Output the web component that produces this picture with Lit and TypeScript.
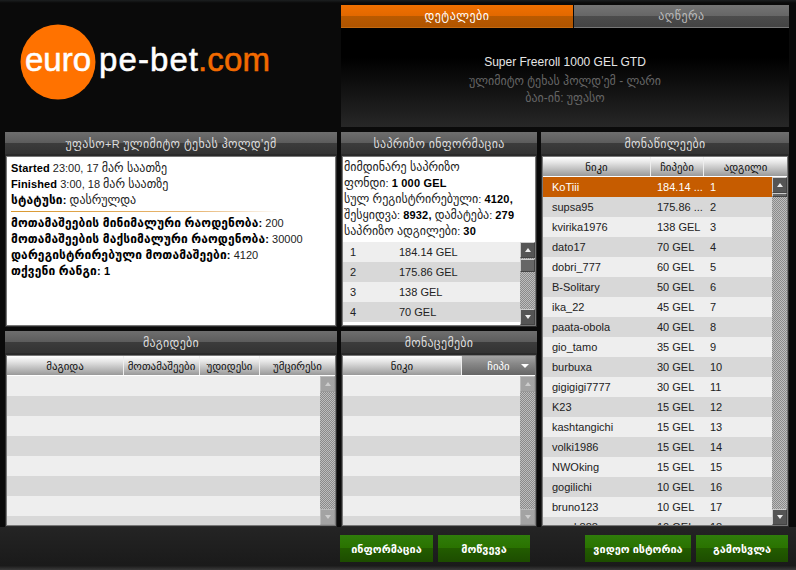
import { LitElement, html, css, nothing } from "lit";
import { customElement } from "lit/decorators.js";

const players: [string, string, string][] = [
  ["KoTiii", "184.14 ...", "1"], ["supsa95", "175.86 ...", "2"], ["kvirika1976", "138 GEL", "3"],
  ["dato17", "70 GEL", "4"], ["dobri_777", "60 GEL", "5"], ["B-Solitary", "50 GEL", "6"],
  ["ika_22", "45 GEL", "7"], ["paata-obola", "40 GEL", "8"], ["gio_tamo", "35 GEL", "9"],
  ["burbuxa", "30 GEL", "10"], ["gigigigi7777", "30 GEL", "11"], ["K23", "15 GEL", "12"],
  ["kashtangichi", "15 GEL", "13"], ["volki1986", "15 GEL", "14"], ["NWOking", "15 GEL", "15"],
  ["gogilichi", "10 GEL", "16"], ["bruno123", "10 GEL", "17"], ["nurak888", "10 GEL", "18"],
];
const prizes: [string, string][] = [["1", "184.14 GEL"], ["2", "175.86 GEL"], ["3", "138 GEL"], ["4", "70 GEL"]];

/* Georgian glyphs sit in DejaVu, whose scale differs from the Latin face: wrap runs so they can be sized apart. */
const t = (s: string) =>
  s.split(/([\u10A0-\u10FF]+(?:[ '\-:]+[\u10A0-\u10FF]+)*)/).map((part, i) =>
    i % 2 ? html`<span class="ka">${part}</span>` : part
  );

@customElement("app-root")
export class AppRoot extends LitElement {
  static styles = css`
    :host {
      display: block; width: 796px; height: 570px; overflow: hidden;
      font-family: "Liberation Sans", "DejaVu Sans", sans-serif; font-size: 11px; color: #111;
    }
    .ka { font-size: 1.09em; }
    .page { width: 796px; height: 570px; display: flex; flex-direction: column; background: #0a0a0a; }
    .top { height: 132px; display: flex; box-sizing: border-box; padding: 5px 7px 5px 0; background: linear-gradient(#1c1f20 0, #0a0a0a 3px); }
    .logo { width: 341px; flex: none; margin-top: -5px; }
    .logo svg { display: block; }
    .logo text { font-family: "Liberation Sans", sans-serif; font-size: 33px; stroke-width: .55px; }
    .details { width: 448px; display: flex; flex-direction: column; }
    .tabs { display: flex; height: 23px; flex: none; gap: 1px; }
    .tab { display: flex; align-items: center; justify-content: center; font-size: 11px; letter-spacing: .5px; box-sizing: border-box; border-bottom: 1px solid #777; }
    .tab.on { width: 232px; color: #fff; background: linear-gradient(#f07000 0, #e26800 50%, #b95a00 50%, #b05400 100%); border-bottom-color: #c46a10; }
    .tab.off { flex: 1; color: #bbb; background: linear-gradient(#747474 0, #666 50%, #4c4c4c 50%, #444 100%); }
    .info { flex: 1; display: flex; flex-direction: column; align-items: center; justify-content: center; gap: 3px; background: linear-gradient(#000 0, #000 30%, #272727 100%); color: #666; font-size: 11px; padding-top: 4px; box-sizing: border-box; line-height: 14px; }
    .info .name { color: #e6e6e6; font-size: 12px; margin-bottom: 2px; }
    .grid { display: grid; grid-template-columns: 332px 196px 248px; grid-template-rows: 195px 196px; gap: 4px; padding: 0 7px 0 5px; }
    .panel { display: flex; flex-direction: column; background: #2a2a2a; min-height: 0; overflow: hidden; }
    .span { grid-row: 1 / 3; grid-column: 3; }
    .title { height: 22px; flex: none; box-sizing: border-box; padding-top: 2px; display: flex; align-items: center; justify-content: center; color: #ddd; font-size: 11px; letter-spacing: .3px; background: linear-gradient(#6e6e6e 0, #5c5c5c 50%, #3c3c3c 50%, #333 100%); }
    .body { flex: 1; min-height: 0; margin: 2px 1px 1px 1px; background: #fff; border: 1px solid #777; overflow: hidden; display: flex; flex-direction: column; }
    .white { padding: 3px 4px; line-height: 16px; font-size: 11px; color: #222; }
    .white b { color: #000; letter-spacing: .12px; }
    .rule { height: 1px; margin: 3px 0 3px 0; width: 270px; background: linear-gradient(90deg, #d9982f, #e8b878 70%, #fff); }
    .prizetext { padding: 2px 1px 0; line-height: 16px; color: #222; flex: none; height: 85px; box-sizing: border-box; }
    .prizetext b { color: #000; letter-spacing: .2px; }
    .split { flex: 1; min-height: 0; display: flex; }
    .rows { flex: 1; min-width: 0; overflow: hidden; }
    .row { height: 20px; display: flex; align-items: center; background: #eee; color: #222; }
    .row:nth-child(even) { background: #d8d8d8; }
    .row.sel { background: #c65c00; color: #fff; }
    .row span { flex: none; box-sizing: border-box; padding-left: 7px; white-space: nowrap; }
    .row .p1 { width: 107px; padding-left: 9px; }
    .p2 { width: 53px; }
    .q1 { width: 49px; }
    .head { display: flex; height: 19px; flex: none; gap: 1px; background: #eee; margin: 0 0 1px; }
    .h { box-sizing: border-box; padding-top: 1px; display: flex; align-items: center; justify-content: center; font-size: 10px; color: #111; background: linear-gradient(#fff 0, #e4e4e4 30%, #999 100%); }
    .h.dark { position: relative; color: #fff; background: linear-gradient(#a4a4a4 0, #888 40%, #666 100%); }
    .h.dark::after { content: ""; position: absolute; right: 6px; top: 8px; border: 4px solid transparent; border-top: 4px solid #fff; border-bottom: 0; }
    .sb { width: 15px; flex: none; display: flex; flex-direction: column; background-color: #a0a0a0; background-image: conic-gradient(#8a8a8a 25%, #bdbdbd 0 50%, #8a8a8a 0 75%, #bdbdbd 0); background-size: 2px 2px; }
    .btn { width: 15px; height: 16px; flex: none; box-sizing: border-box; background: #555; border: 1px solid; border-color: #ccc #444 #444 #ccc; display: flex; align-items: center; justify-content: center; }
    .btn i { display: block; border: 3.5px solid transparent; }
    .btn.up i { border-top: 0; border-bottom: 4px solid #eee; }
    .btn.dn i { border-bottom: 0; border-top: 4px solid #eee; }
    .sb.off .btn { background: #a3a3a3; border-color: #bbb #999 #999 #bbb; }
    .sb.off .btn.up i { border-bottom-color: #ccc; }
    .sb.off .btn.dn i { border-top-color: #ccc; }
    .thumb { height: 13px; flex: none; box-sizing: border-box; background: #666; border: 1px solid; border-color: #ccc #444 #444 #ccc; margin-top: 1px; }
    .thumb.thin { height: 4px; background: #666; margin-top: 0; }
    .fill { flex: 1; }
    .bar { flex: 1; display: flex; gap: 5px; box-sizing: border-box; padding: 8px 7px 7px 340px; background: linear-gradient(#242424, #1a1a1a 90%, #3a3a3a 100%); }
    .go { height: 27px; box-sizing: border-box; padding-top: 1px; display: flex; align-items: center; justify-content: center; color: #fff; font-weight: bold; font-size: 10px; background: linear-gradient(#2f7d0a 0, #2a7200 50%, #225c00 50%, #1d4c00 100%); }
    .g1 { width: 93px; } .g2 { width: 92px; } .g3 { width: 106px; margin-left: 50px; } .g4 { width: 92px; }
  `;

  sb(thumb: "" | "big" | "thin", off = false) {
    return html`<div class="sb ${off ? "off" : ""}">
      <div class="btn up"><i></i></div>
      ${thumb === "big" ? html`<div class="thumb"></div>` : thumb === "thin" ? html`<div class="thumb thin"></div>` : nothing}
      <div class="fill"></div>
      <div class="btn dn"><i></i></div>
    </div>`;
  }

  empty(n: number) {
    return Array.from({ length: n }, () => html`<div class="row"></div>`);
  }

  render() {
    return html`<div class="page">
      <div class="top">
        <div class="logo">
          <svg width="341" height="132" viewBox="0 0 341 132">
            <circle cx="58" cy="62" r="37.5" fill="#ff7200"></circle>
            <text x="25" y="70.5" fill="#fff" stroke="#fff" textLength="66">euro</text>
            <text x="99" y="70.5" fill="#fff" stroke="#fff" textLength="99">pe-bet</text>
            <text x="198" y="70.5" fill="#f26a00" stroke="#f26a00" textLength="72">.com</text>
          </svg>
        </div>
        <div class="details">
          <div class="tabs">
            <div class="tab on">${t("დეტალები")}</div>
            <div class="tab off">${t("აღწერა")}</div>
          </div>
          <div class="info">
            <div class="name">Super Freeroll 1000 GEL GTD</div>
            <div>${t("ულიმიტო ტეხას ჰოლდ'ემ - ლარი")}</div>
            <div>${t("ბაი-ინ: უფასო")}</div>
          </div>
        </div>
      </div>
      <div class="grid">
        <section class="panel">
          <div class="title"><div>${t("უფასო+R ულიმიტო ტეხას ჰოლდ'ემ")}</div></div>
          <div class="body white">
            <div><b>Started</b> 23:00, 17 ${t("მარ საათზე")}</div>
            <div><b>Finished</b> 3:00, 18 ${t("მარ საათზე")}</div>
            <div><b>${t("სტატუსი:")}</b> ${t("დასრულდა")}</div>
            <div class="rule"></div>
            <div><b>${t("მოთამაშეების მინიმალური რაოდენობა:")}</b> 200</div>
            <div><b>${t("მოთამაშეების მაქსიმალური რაოდენობა:")}</b> 30000</div>
            <div><b>${t("დარეგისტრირებული მოთამაშეები:")}</b> 4120</div>
            <div><b>${t("თქვენი რანგი:")} 1</b></div>
          </div>
        </section>
        <section class="panel">
          <div class="title"><div>${t("საპრიზო ინფორმაცია")}</div></div>
          <div class="body">
            <div class="prizetext">
              ${t("მიმდინარე საპრიზო")}<br />${t("ფონდი:")} <b>1 000 GEL</b><br />
              ${t("სულ რეგისტრირებული:")} <b>4120,</b><br />
              ${t("შესყიდვა:")} <b>8932,</b> ${t("დამატება:")} <b>279</b><br />
              ${t("საპრიზო ადგილები:")} <b>30</b>
            </div>
            <div class="split">
              <div class="rows">
                ${prizes.map(([a, b]) => html`<div class="row"><span class="q1">${a}</span><span>${b}</span></div>`)}
              </div>
              ${this.sb("big")}
            </div>
          </div>
        </section>
        <section class="panel span">
          <div class="title"><div>${t("მონაწილეები")}</div></div>
          <div class="body">
            <div class="head">
              <div class="h" style="width:107px">${t("ნიკი")}</div>
              <div class="h" style="width:52px">${t("ჩიპები")}</div>
              <div class="h" style="flex:1">${t("ადგილი")}</div>
            </div>
            <div class="split">
              <div class="rows">
                ${players.map(([n, c, p], i) => html`<div class="row ${i === 0 ? "sel" : ""}"><span class="p1">${n}</span><span class="p2">${c}</span><span>${p}</span></div>`)}
              </div>
              ${this.sb("thin")}
            </div>
          </div>
        </section>
        <section class="panel">
          <div class="title"><div>${t("მაგიდები")}</div></div>
          <div class="body">
            <div class="head">
              <div class="h" style="width:116px">${t("მაგიდა")}</div>
              <div class="h" style="width:75px">${t("მოთამაშეები")}</div>
              <div class="h" style="width:59px">${t("უდიდესი")}</div>
              <div class="h" style="flex:1">${t("უმცირესი")}</div>
            </div>
            <div class="split">
              <div class="rows">${this.empty(8)}</div>
              ${this.sb("", true)}
            </div>
          </div>
        </section>
        <section class="panel">
          <div class="title"><div>${t("მონაცემები")}</div></div>
          <div class="body">
            <div class="head">
              <div class="h" style="width:118px">${t("ნიკი")}</div>
              <div class="h dark" style="flex:1">${t("ჩიპი")}</div>
            </div>
            <div class="split">
              <div class="rows">${this.empty(8)}</div>
              ${this.sb("", true)}
            </div>
          </div>
        </section>
      </div>
      <div class="bar">
        <div class="go g1">${t("ინფორმაცია")}</div>
        <div class="go g2">${t("მოწვევა")}</div>
        <div class="go g3">${t("ვიდეო ისტორია")}</div>
        <div class="go g4">${t("გამოსვლა")}</div>
      </div>
    </div>`;
  }
}
